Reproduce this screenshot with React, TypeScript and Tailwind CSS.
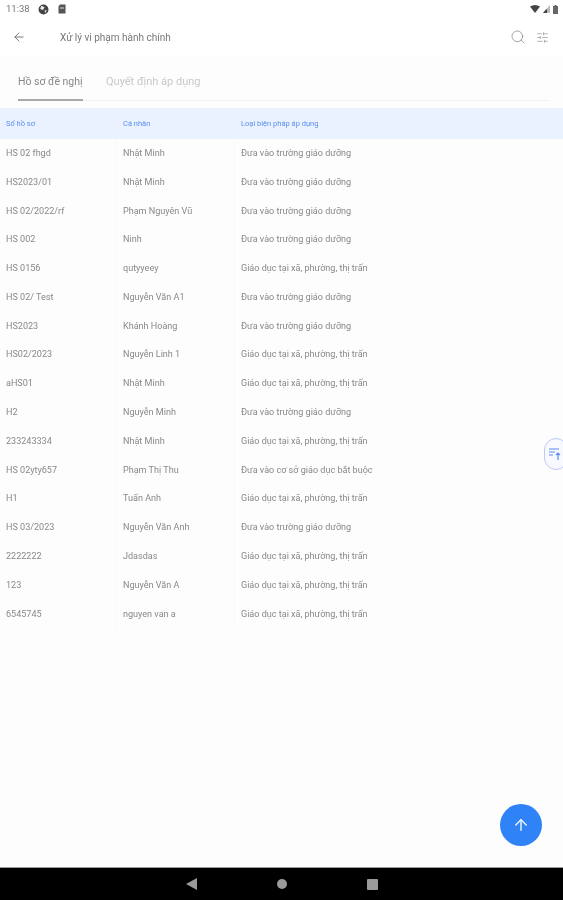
import { ArrowLeft, ArrowUp, Search, SlidersHorizontal } from "lucide-react";

const rows: [string, string, string][] = [
  ["HS 02 fhgd", "Nhật Minh", "Đưa vào trường giáo dưỡng"],
  ["HS2023/01", "Nhật Minh", "Đưa vào trường giáo dưỡng"],
  ["HS 02/2022/rf", "Phạm Nguyên Vũ", "Đưa vào trường giáo dưỡng"],
  ["HS 002", "Ninh", "Đưa vào trường giáo dưỡng"],
  ["HS 0156", "qutyyeey", "Giáo dục tại xã, phường, thị trấn"],
  ["HS 02/ Test", "Nguyễn Văn A1", "Đưa vào trường giáo dưỡng"],
  ["HS2023", "Khánh Hoàng", "Đưa vào trường giáo dưỡng"],
  ["HS02/2023", "Nguyễn Linh 1", "Giáo dục tại xã, phường, thị trấn"],
  ["aHS01", "Nhật Minh", "Giáo dục tại xã, phường, thị trấn"],
  ["H2", "Nguyễn Minh", "Đưa vào trường giáo dưỡng"],
  ["233243334", "Nhật Minh", "Giáo dục tại xã, phường, thị trấn"],
  ["HS 02yty657", "Phạm Thị Thu", "Đưa vào cơ sở giáo dục bắt buộc"],
  ["H1", "Tuấn Anh", "Giáo dục tại xã, phường, thị trấn"],
  ["HS 03/2023", "Nguyễn Văn Anh", "Đưa vào trường giáo dưỡng"],
  ["2222222", "Jdasdas", "Giáo dục tại xã, phường, thị trấn"],
  ["123", "Nguyễn Văn A", "Giáo dục tại xã, phường, thị trấn"],
  ["6545745", "nguyen van a", "Giáo dục tại xã, phường, thị trấn"],
];

export default function App() {
  return (
    <div className="relative flex h-[900px] w-[563px] flex-col overflow-hidden bg-[#fdfdfd] font-['Roboto',sans-serif]">
      <div className="flex h-[18px] shrink-0 items-center justify-between bg-white pl-[6px] pr-[5px] text-[9.5px] text-[#777] blur-[0.4px]">
        <div className="flex items-center gap-[8px]">
          <span>11:38</span>
          <svg width="11" height="11" viewBox="0 0 10 10">
            <circle cx="5" cy="5" r="4.5" fill="#444" />
            <path d="M3 1.5 L6 3 L4.5 5.5 L2 4.5 Z M6 6 L8 5.5 L6.5 8.5 Z" fill="#eee" />
          </svg>
          <svg className="ml-[1px]" width="8" height="10" viewBox="0 0 8 10">
            <path d="M2 0.5 H7.5 V9.5 H0.5 V2.5 Z" fill="#555" />
            <rect x="2" y="3.5" width="4" height="1" fill="#ddd" />
          </svg>
        </div>
        <div className="flex items-center gap-[3px]">
          <svg width="10" height="8" viewBox="0 0 10 8"><path d="M0 1.5 Q5 -1.5 10 1.5 L5 8 Z" fill="#444" /></svg>
          <svg width="7" height="8" viewBox="0 0 7 8"><path d="M7 0 V8 H0 Z" fill="#bbb" /><path d="M4 4 V8 H0 L3 4.5 Z" fill="#444" /></svg>
          <svg width="5" height="9" viewBox="0 0 5 9"><path d="M1.5 0 H3.5 V1 H5 V9 H0 V1 H1.5 Z" fill="#666" /></svg>
        </div>
      </div>

      <div className="flex h-[38px] shrink-0 items-center bg-white pl-[12px] pr-[14px] blur-[0.4px]">
        <ArrowLeft size={14} strokeWidth={1.3} className="text-[#555]" />
        <span className="ml-[34px] flex-1 text-[10px] text-[#777]">Xử lý vi phạm hành chính</span>
        <Search size={16} strokeWidth={1} className="text-[#777]" />
        <SlidersHorizontal size={13} strokeWidth={1} className="ml-[10px] text-[#777]" />
      </div>

      <div className="ml-[18px] mr-[15px] mt-[14px] flex h-[31px] shrink-0 gap-[23px] border-b border-[#f1f1f1] blur-[0.4px]">
        <div className="-mb-px h-[31px] w-[65px] whitespace-nowrap border-b-2 border-[#a9a9a9] pt-[4px] text-[10.5px] text-[#888]">Hồ sơ đề nghị</div>
        <div className="whitespace-nowrap pt-[4px] text-[11px] text-[#c8c8c8]">Quyết định áp dụng</div>
      </div>

      <div className="mt-[7px] blur-[0.45px]">
        <div className="grid h-[30.5px] grid-cols-[117px_118px_1fr] items-center bg-[#e9f2fe] text-[7.5px] text-[#5b8ff0]">
          <span className="pl-[6px]">Số hồ sơ</span>
          <span className="pl-[6px]">Cá nhân</span>
          <span className="pl-[6px]">Loại biện pháp áp dụng</span>
        </div>
        <div className="pt-[0.8px]">
          {rows.map((r, i) => (
            <div key={i} className="grid h-[28.8px] grid-cols-[117px_118px_1fr] items-stretch text-[9.05px] text-[#888]">
              <span className="flex items-center border-r border-[#f8f8f8] pl-[6px]">{r[0]}</span>
              <span className="flex items-center border-r border-[#f8f8f8] pl-[6px]">{r[1]}</span>
              <span className="flex items-center pl-[6px]">{r[2]}</span>
            </div>
          ))}
        </div>
      </div>

      <div className="flex-1" />

      <div className="flex h-[33px] shrink-0 items-center border-t border-[#999] bg-black">
        <div className="flex w-full items-center justify-center gap-[80px]">
          <svg width="11" height="12" viewBox="0 0 11 12"><path d="M11 0 V12 L0 6 Z" fill="#9a9a9a" /></svg>
          <div className="h-[10px] w-[10px] rounded-full bg-[#9a9a9a]" />
          <div className="h-[11px] w-[11px] rounded-[1px] bg-[#9a9a9a]" />
        </div>
      </div>

      <div className="absolute left-[544px] top-[438px] flex h-[32px] w-[24px] items-center rounded-full border border-[#bcc9fa] bg-[#f7f9ff] pl-[3px] blur-[0.4px]">
        <svg width="14" height="15" viewBox="0 0 14 15" fill="none" stroke="#5b8ff0" strokeWidth="1.2">
          <path d="M1 2 H11 M1 5 H7 M1 8 H5 M10 13 V6 M8 8 L10 6 L12 8" />
        </svg>
      </div>

      <div className="absolute left-[500px] top-[804px] flex h-[42px] w-[42px] items-center justify-center rounded-full bg-[#2f83f7] blur-[0.3px]">
        <ArrowUp size={18} strokeWidth={2} className="text-[#e8f0ff]" />
      </div>
    </div>
  );
}
